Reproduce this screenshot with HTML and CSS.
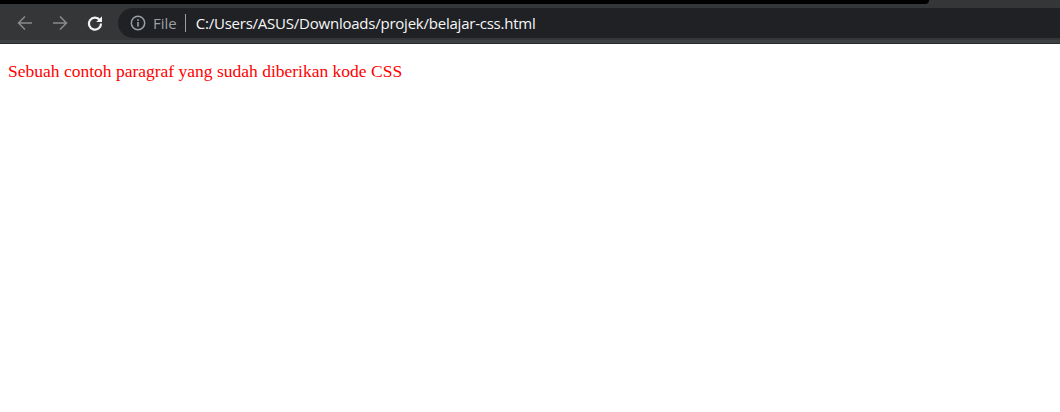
FILE: index.html
```html
<!DOCTYPE html>
<html>
<head>
<meta charset="utf-8">
<link rel="stylesheet" href="styles.css">
</head>
<body>
<div class="chrome">
  <div class="tabstrip"><div class="tabshade"></div></div>
  <div class="toolbar">
    <div class="navbtns">
      <svg class="nav" width="16" height="16" viewBox="0 0 16 16"><path d="M15 8H1.8M8 1.5L1.5 8 8 14.5" fill="none" stroke="#8a8b8d" stroke-width="1.5"/></svg>
      <svg class="nav" width="16" height="16" viewBox="0 0 16 16"><path d="M1 8h13.2M8 1.5L14.5 8 8 14.5" fill="none" stroke="#8a8b8d" stroke-width="1.5"/></svg>
      <svg class="nav" width="16" height="16" viewBox="0 0 16 16"><path d="M12.8 5A6 6 0 1 0 14 8.5" fill="none" stroke="#f1f3f4" stroke-width="2.2"/><path d="M15 1.2v5.8H9.2z" fill="#f1f3f4"/></svg>
    </div>
    <div class="omnibox">
      <svg class="info" width="16" height="16" viewBox="0 0 16 16"><circle cx="8" cy="8" r="6.7" fill="none" stroke="#9aa0a6" stroke-width="1.5"/><rect x="7.2" y="7" width="1.6" height="4.6" fill="#9aa0a6"/><rect x="7.2" y="4.2" width="1.6" height="1.7" fill="#9aa0a6"/></svg>
      <span class="scheme">File</span>
      <span class="sep"></span>
      <span class="url">C:/Users/ASUS/Downloads/projek/belajar-css.html</span>
    </div>
  </div>
  <div class="bottomband"></div>
</div>
<div class="page">
  <p class="para">Sebuah contoh paragraf yang sudah diberikan kode CSS</p>
</div>
</body>
</html>
```
FILE: styles.css
```css
html, body {
  margin: 0;
  padding: 0;
  background: #ffffff;
}
.chrome {
  background: #353638;
}
.tabstrip {
  height: 4px;
  position: relative;
}
.tabshade {
  position: absolute;
  left: 0;
  top: 0;
  width: 929px;
  height: 4px;
  background: #000000;
  border-bottom-right-radius: 4px;
}
.toolbar {
  display: flex;
  align-items: center;
  height: 30px;
  padding: 4px 0 0;
}
.navbtns {
  display: flex;
  align-items: center;
  gap: 19px;
  padding-left: 17px;
  width: 101px;
}
.omnibox {
  flex: 1;
  height: 30px;
  background: #202124;
  border-radius: 15px 0 0 15px;
  display: flex;
  align-items: center;
  padding-left: 12px;
  font-family: "Open Sans", "Noto Sans", sans-serif;
  font-size: 15px;
}
.info {
  margin-right: 7px;
}
.scheme {
  color: #9aa0a6;
}
.sep {
  width: 1px;
  height: 18px;
  background: #9aa0a6;
  margin: 0 10px 0 8px;
}
.url {
  color: #f6f7f8;
  letter-spacing: -0.23px;
}
.bottomband {
  height: 6px;
  background: linear-gradient(#353638 0, #353638 2px, #3f4042 2px, #3f4042 5px, #2a2b2d 5px);
}
.page {
  padding: 17px 8px;
}
.para {
  margin: 0;
  color: #ff0000;
  font-family: "Liberation Serif", serif;
  font-size: 17.5px;
}
```
